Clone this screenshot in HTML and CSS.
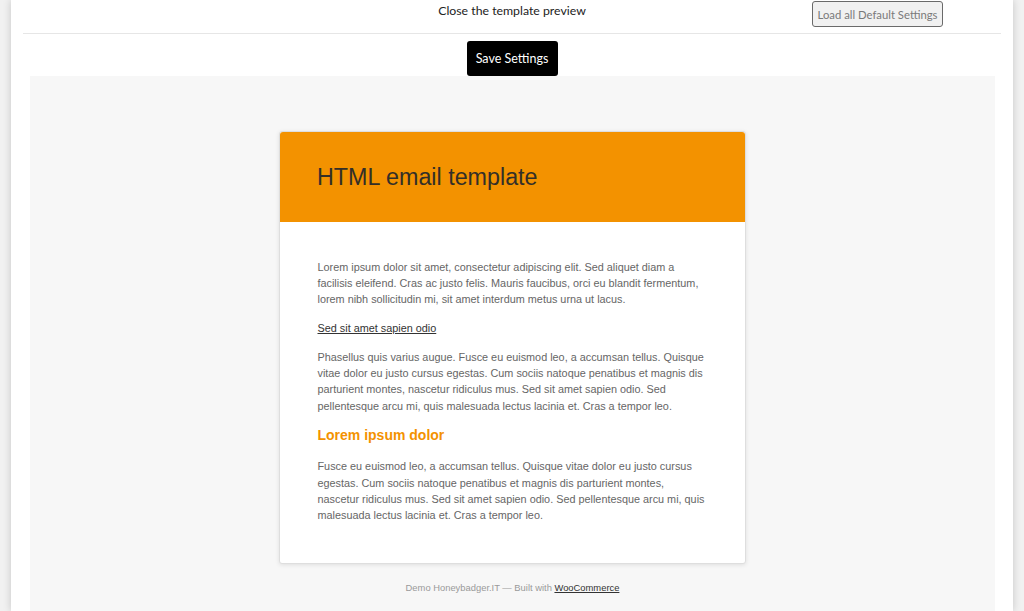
FILE: index.html
```html
<!DOCTYPE html>
<html>
<head>
<meta charset="utf-8">
<link rel="stylesheet" href="styles.css">
</head>
<body>
<div class="panel">
  <div class="topbar">
    <div class="spacer"></div>
    <div class="close-link">Close the template preview</div>
    <div class="right">
      <button class="btn-default">Load all Default Settings</button>
    </div>
  </div>
  <div class="save-row">
    <button class="btn-save">Save Settings</button>
  </div>
  <div class="preview">
    <div class="email">
      <div class="email-header">
        <h1>HTML email template</h1>
      </div>
      <div class="email-body">
        <p>Lorem ipsum dolor sit amet, consectetur adipiscing elit. Sed aliquet diam a facilisis eleifend. Cras ac justo felis. Mauris faucibus, orci eu blandit fermentum, lorem nibh sollicitudin mi, sit amet interdum metus urna ut lacus.</p>
        <p><a class="link" href="#">Sed sit amet sapien odio</a></p>
        <p>Phasellus quis varius augue. Fusce eu euismod leo, a accumsan tellus. Quisque vitae dolor eu justo cursus egestas. Cum sociis natoque penatibus et magnis dis parturient montes, nascetur ridiculus mus. Sed sit amet sapien odio. Sed pellentesque arcu mi, quis malesuada lectus lacinia et. Cras a tempor leo.</p>
        <h2>Lorem ipsum dolor</h2>
        <p class="last">Fusce eu euismod leo, a accumsan tellus. Quisque vitae dolor eu justo cursus egestas. Cum sociis natoque penatibus et magnis dis parturient montes, nascetur ridiculus mus. Sed sit amet sapien odio. Sed pellentesque arcu mi, quis malesuada lectus lacinia et. Cras a tempor leo.</p>
      </div>
    </div>
    <div class="credit">Demo Honeybadger.IT — Built with <a class="credit-link" href="#">WooCommerce</a></div>
  </div>
</div>
</body>
</html>
```

FILE: styles.css
```css
html, body {
  margin: 0;
  padding: 0;
}
body {
  background: #f1f1f1;
  height: 611px;
  overflow: hidden;
  font-family: "Lato", "Liberation Sans", sans-serif;
}
.panel {
  margin: 0 11px;
  background: #fff;
  height: 611px;
  overflow: hidden;
  box-shadow: 0 0 8px rgba(0,0,0,0.18);
  padding: 0 12px;
  box-sizing: border-box;
}
.topbar {
  display: grid;
  grid-template-columns: 1fr auto 1fr;
  align-items: start;
  padding-top: 2px;
  padding-bottom: 6px;
  border-bottom: 1px solid #e6e6e6;
}
.close-link {
  font-size: 12.3px;
  line-height: 17px;
  color: #222;
}
.right {
  display: flex;
  justify-content: flex-end;
  padding-right: 58px;
}
.btn-default {
  height: 26px;
  width: 131px;
  margin-top: -1px;
  padding: 0;
  border: 1px solid #6a6a6a;
  border-radius: 3px;
  background: #f1f1f1;
  color: #7a7a7a;
  font-family: "Lato", "Liberation Sans", sans-serif;
  font-size: 11.3px;
}
.save-row {
  display: flex;
  justify-content: center;
  padding-top: 7px;
}
.btn-save {
  height: 35px;
  width: 91px;
  padding: 0;
  border: none;
  border-radius: 3px;
  background: #000;
  color: #fff;
  font-family: "Lato", "Liberation Sans", sans-serif;
  font-size: 12.5px;
}
.preview {
  margin: 0 6px 0 7px;
  background: #f7f7f7;
  padding-top: 55px;
  height: 535px;
}
.email {
  width: 467px;
  margin: 0 auto;
  box-sizing: border-box;
  background: #fff;
  border: 1px solid #dedede;
  border-radius: 3px;
  box-shadow: 0 1px 4px rgba(0,0,0,0.1);
  font-family: "Liberation Sans", Arial, sans-serif;
}
.email-header {
  background: #f39200;
  border-radius: 3px 3px 0 0;
  padding: 27.5px 37px 27.5px;
}
.email-header h1 {
  margin: 0;
  font-size: 23.3px;
  line-height: 35px;
  font-weight: normal;
  color: #332f28;
}
.email-body {
  padding: 36.5px 37.5px 39.5px;
}
.email-body p {
  margin: 0 0 12.5px;
  font-size: 10.85px;
  line-height: 16.3px;
  color: #666;
}
.email-body p.last {
  margin-bottom: 0;
}
.link {
  color: #333;
  text-decoration: underline;
}
.email-body h2 {
  margin: 0 0 13.5px;
  font-size: 14px;
  line-height: 18.4px;
  font-weight: bold;
  color: #f39200;
}
.credit {
  text-align: center;
  font-family: "Liberation Sans", Arial, sans-serif;
  font-size: 9.4px;
  line-height: 14px;
  color: #9a9a9a;
  padding-top: 17.5px;
}
.credit-link {
  color: #333;
  text-decoration: underline;
}
```
